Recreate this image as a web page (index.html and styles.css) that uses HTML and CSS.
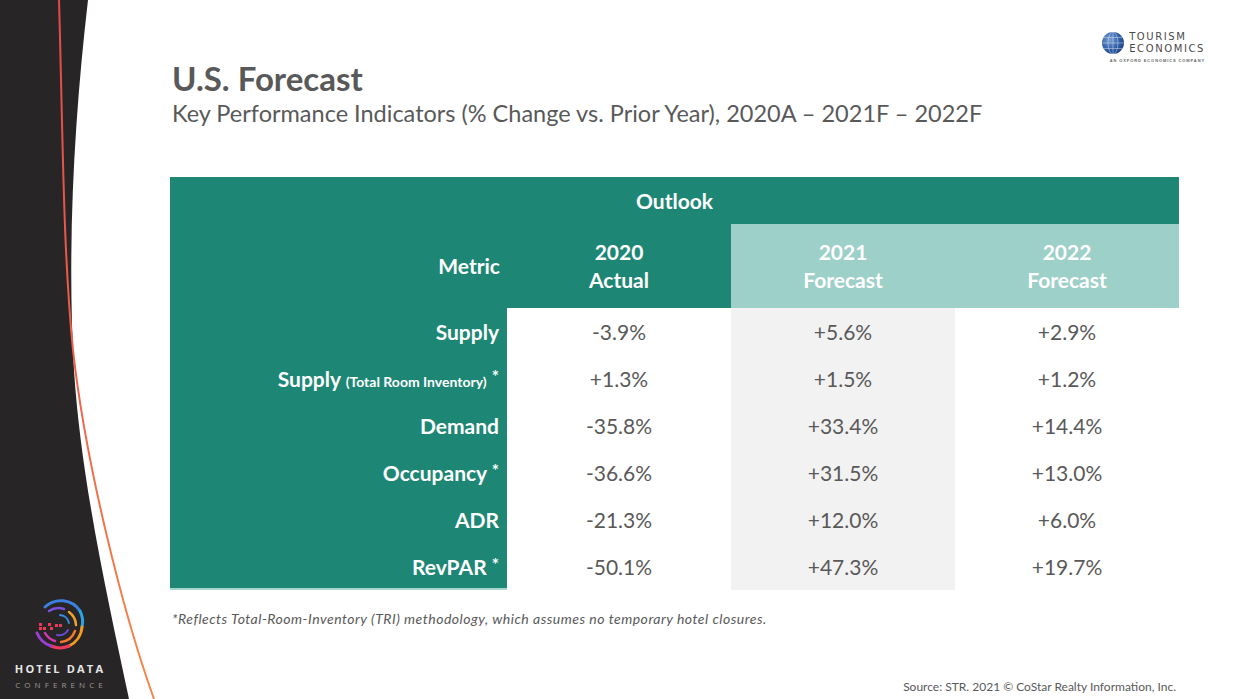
FILE: index.html
```html
<!DOCTYPE html>
<html lang="en">
<head>
<meta charset="utf-8">
<title>U.S. Forecast</title>
<link rel="stylesheet" href="styles.css">
</head>
<body>
<div class="slide">
  <aside class="rail">
    <svg class="rail-bg" width="170" height="699" viewBox="0 0 170 699" aria-hidden="true">
      <defs>
        <linearGradient id="lineGrad" x1="0" y1="0" x2="0" y2="1">
          <stop offset="0" stop-color="#e2494a"/>
          <stop offset="0.5" stop-color="#ec5f4a"/>
          <stop offset="1" stop-color="#f5874a"/>
        </linearGradient>
      </defs>
      <path d="M0 0 H88 C74 120 67 250 74 370 C 81 480 108 600 129 699 H0 Z" fill="#272525"/>
      <path d="M59 0 C63 140 63 250 73 350 C 85 460 122 610 154 699" fill="none" stroke="url(#lineGrad)" stroke-width="2"/>
    </svg>
    <div class="hdc">
      <svg class="hdc-mark" width="56" height="56" viewBox="0 0 56 56" aria-hidden="true">
        <g fill="none" stroke-linecap="round">
          <path d="M14 10 A23 23 0 0 1 49 14" stroke="#3b7fe0" stroke-width="3"/>
          <path d="M49 14 A23 23 0 0 1 51 30" stroke="#2aa3e6" stroke-width="3"/>
          <path d="M51 30 A23 23 0 0 1 38 49" stroke="#f39a22" stroke-width="3"/>
          <path d="M38 49 A23 23 0 0 1 20 49" stroke="#ee3a5a" stroke-width="3"/>
          <path d="M20 49 A23 23 0 0 1 6 36" stroke="#9b3fd0" stroke-width="3"/>
          <path d="M18 14 A17 17 0 0 1 33 12" stroke="#7a4fe0" stroke-width="2.5"/>
          <path d="M38 15 A17 17 0 0 1 45 28" stroke="#f0a030" stroke-width="2.5"/>
          <path d="M44 34 A17 17 0 0 1 30 45" stroke="#f07a2a" stroke-width="2.5"/>
          <path d="M24 44 A17 17 0 0 1 14 36" stroke="#d03ab0" stroke-width="2.5"/>
          <path d="M29 18 A10 10 0 0 1 38 26" stroke="#3a8ae0" stroke-width="2"/>
          <path d="M37 33 A10 10 0 0 1 26 38" stroke="#6a4ad8" stroke-width="2"/>
        </g>
        <g fill="#ee3a5a">
          <rect x="8" y="26" width="3" height="3"/>
          <rect x="8" y="30" width="3" height="3"/>
          <rect x="12" y="30" width="3" height="3"/>
          <rect x="17" y="26" width="3" height="3"/>
          <rect x="19" y="30" width="3" height="3"/>
          <rect x="24" y="27" width="3" height="3"/>
          <rect x="28" y="27" width="3" height="3"/>
        </g>
      </svg>
      <div class="hdc-name">HOTEL DATA</div>
      <div class="hdc-sub">CONFERENCE</div>
    </div>
  </aside>

  <main class="content">
    <header class="head">
      <div class="titles">
        <h1 class="title">U.S. Forecast</h1>
        <p class="subtitle">Key Performance Indicators (% Change vs. Prior Year), 2020A – 2021F – 2022F</p>
      </div>
      <div class="te-logo">
        <div class="te-row">
          <svg class="te-globe" width="24" height="24" viewBox="0 0 24 24" aria-hidden="true">
            <defs>
              <radialGradient id="globeGrad" cx="0.35" cy="0.35" r="0.75">
                <stop offset="0" stop-color="#7aa0d4"/>
                <stop offset="0.6" stop-color="#2f5ea8"/>
                <stop offset="1" stop-color="#1d3f7a"/>
              </radialGradient>
            </defs>
            <circle cx="12" cy="12" r="11" fill="url(#globeGrad)"/>
            <g fill="none" stroke="#dfe8f5" stroke-width="0.6" opacity="0.8">
              <ellipse cx="12" cy="12" rx="5" ry="11"/>
              <path d="M1 12 H23 M3 6.5 H21 M3 17.5 H21 M12 1 V23"/>
            </g>
          </svg>
          <div class="te-words">
            <span>TOURISM</span>
            <span>ECONOMICS</span>
          </div>
        </div>
        <div class="te-tag">AN OXFORD ECONOMICS COMPANY</div>
      </div>
    </header>

    <table class="kpi">
      <colgroup>
        <col class="c-metric">
        <col class="c-val">
        <col class="c-val">
        <col class="c-val">
      </colgroup>
      <thead>
        <tr class="r-top">
          <th colspan="4" class="outlook">Outlook</th>
        </tr>
        <tr class="r-sub">
          <th class="metric-h">Metric</th>
          <th class="yr dark">2020<br>Actual</th>
          <th class="yr light">2021<br>Forecast</th>
          <th class="yr light">2022<br>Forecast</th>
        </tr>
      </thead>
      <tbody>
        <tr>
          <th class="m">Supply</th>
          <td>-3.9%</td><td class="shade">+5.6%</td><td>+2.9%</td>
        </tr>
        <tr>
          <th class="m">Supply <small>(Total Room Inventory)</small> <sup>*</sup></th>
          <td>+1.3%</td><td class="shade">+1.5%</td><td>+1.2%</td>
        </tr>
        <tr>
          <th class="m">Demand</th>
          <td>-35.8%</td><td class="shade">+33.4%</td><td>+14.4%</td>
        </tr>
        <tr>
          <th class="m">Occupancy <sup>*</sup></th>
          <td>-36.6%</td><td class="shade">+31.5%</td><td>+13.0%</td>
        </tr>
        <tr>
          <th class="m">ADR</th>
          <td>-21.3%</td><td class="shade">+12.0%</td><td>+6.0%</td>
        </tr>
        <tr class="last">
          <th class="m">RevPAR <sup>*</sup></th>
          <td>-50.1%</td><td class="shade">+47.3%</td><td>+19.7%</td>
        </tr>
      </tbody>
    </table>

    <p class="note">*Reflects Total-Room-Inventory (TRI) methodology, which assumes no temporary hotel closures.</p>
    <p class="source">Source: STR. 2021 © CoStar Realty Information, Inc.</p>
  </main>
</div>
</body>
</html>
```

FILE: styles.css
```css
* { box-sizing: border-box; }

html, body {
  margin: 0;
  padding: 0;
  background: #ffffff;
}

body {
  font-family: Lato, "Open Sans", "Liberation Sans", sans-serif;
  color: #595959;
}

.slide {
  width: 1245px;
  height: 699px;
  overflow: hidden;
  display: grid;
  grid-template-columns: 170px 1fr;
  background: #ffffff;
}

/* left decorative rail */
.rail {
  display: grid;
  grid-template: 1fr / 1fr;
  height: 699px;
}

.rail-bg,
.hdc {
  grid-area: 1 / 1;
}

.rail-bg {
  display: block;
}

.hdc {
  align-self: end;
  justify-self: start;
  width: 118px;
  padding-bottom: 8px;
  display: flex;
  flex-direction: column;
  align-items: center;
}

.hdc-mark {
  display: block;
  margin-bottom: 9px;
}

.hdc-name {
  font-family: "Open Sans", Lato, sans-serif;
  font-weight: 700;
  font-size: 11px;
  line-height: 14px;
  letter-spacing: 2.2px;
  color: #e6e6e6;
  margin-right: -2px;
}

.hdc-sub {
  font-family: "Open Sans", Lato, sans-serif;
  font-weight: 400;
  font-size: 8px;
  line-height: 12px;
  letter-spacing: 4.1px;
  color: #9a9a9a;
  margin-top: 3px;
  margin-right: -4px;
}

/* main content */
.content {
  display: flex;
  flex-direction: column;
  padding: 30px 66px 5px 0;
  min-width: 0;
}

.head {
  display: flex;
  justify-content: space-between;
  align-items: flex-start;
}

.titles {
  padding-top: 29px;
  padding-left: 2px;
}

.title {
  margin: 0;
  font-size: 33px;
  line-height: 38px;
  font-weight: 700;
  color: #595959;
}

.subtitle {
  margin: 2px 0 0;
  font-size: 23.5px;
  line-height: 28px;
  font-weight: 400;
  color: #595959;
}

/* Tourism Economics logo */
.te-logo {
  margin-right: -26px;
  margin-top: 1px;
  display: flex;
  flex-direction: column;
  align-items: flex-end;
}

.te-row {
  display: flex;
  align-items: center;
  gap: 4px;
}

.te-globe {
  display: block;
}

.te-words {
  display: flex;
  flex-direction: column;
  font-family: "DejaVu Sans", "Liberation Sans", sans-serif;
  font-weight: 400;
  font-size: 10px;
  line-height: 12px;
  letter-spacing: 1.6px;
  color: #4a4a4a;
}

.te-tag {
  margin-top: 3px;
  font-family: "Liberation Sans", sans-serif;
  font-weight: 700;
  font-size: 4px;
  line-height: 6px;
  letter-spacing: 0.9px;
  color: #666666;
}

/* table */
.kpi {
  margin-top: 50px;
  width: 1009px;
  border-collapse: collapse;
  border-spacing: 0;
  table-layout: fixed;
}

.c-metric { width: 337px; }
.c-val { width: 224px; }

.kpi th,
.kpi td {
  padding: 0;
  vertical-align: middle;
}

.r-top th {
  height: 47px;
}

.outlook {
  background: #1e8674;
  color: #ffffff;
  font-weight: 700;
  font-size: 21px;
  text-align: center;
}

.r-sub th {
  height: 84px;
  font-weight: 700;
  font-size: 21px;
  line-height: 28px;
  color: #ffffff;
}

.metric-h {
  background: #1e8674;
  text-align: right;
  padding-right: 7px !important;
}

.yr {
  text-align: center;
}

.yr.dark { background: #1e8674; }
.yr.light { background: #9dd0c8; }

.kpi tbody tr {
  height: 47px;
}

.kpi .m {
  background: #1e8674;
  color: #ffffff;
  font-weight: 700;
  font-size: 21px;
  text-align: right;
  padding-right: 8px;
  white-space: nowrap;
}

.kpi .m small {
  font-size: 14px;
  font-weight: 700;
}

.kpi .m sup {
  font-size: 17px;
  vertical-align: 4px;
  line-height: 0;
}

.kpi tbody td {
  text-align: center;
  font-size: 21px;
  color: #595959;
  background: #ffffff;
}

.kpi tbody td.shade {
  background: #f2f2f2;
}

.kpi tr.last .m {
  box-shadow: inset 0 -2px 0 #a6d6cd;
}

.note {
  margin: 20px 0 0 2px;
  font-style: italic;
  font-size: 14px;
  line-height: 18px;
  letter-spacing: 0.5px;
  color: #595959;
}

.source {
  margin: auto 3px 0 0;
  text-align: right;
  font-size: 12px;
  line-height: 15px;
  color: #595959;
}
```
